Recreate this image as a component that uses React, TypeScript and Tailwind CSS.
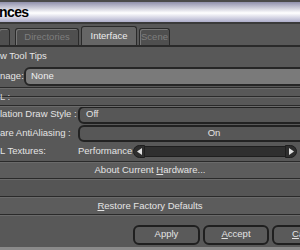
import React from 'react'

const font = { fontFamily: '"Liberation Sans", Arial, sans-serif' }

function Line() {
  return <div className="h-[2px] shrink-0 border-t border-[#2a2a2a] border-b border-b-[#6a6a6a]" />
}

function Tab({ label, active, w }: { label: string; active?: boolean; w: string }) {
  return (
    <div
      className={`${w} flex items-center justify-center rounded-t-[3px] border border-b-0 ${
        active
          ? 'h-[19px] bg-[#666666] border-[#2a2a2a] text-[#ececec]'
          : 'h-[17px] bg-[#4f4f4f] border-[#2a2a2a] text-[#7e7e7e] shadow-[inset_1px_1px_0_#777]'
      }`}
    >
      {label}
    </div>
  )
}

export default function App() {
  return (
    <div className="w-[300px] h-[250px] overflow-hidden bg-[#585858] text-[9.5px] text-[#e4e4e4] flex flex-col" style={font}>
      {/* title bar */}
      <div className="h-[24px] shrink-0 border-t-2 border-[#4a4a4a] border-b-2 border-b-[#3a3a3a] bg-[linear-gradient(to_bottom,#9090ac,#ffffff_55%,#aeaecb)] flex items-center">
        <span className="text-[14px] font-bold text-black tracking-[-0.6px] ml-[-1px]">nces</span>
      </div>

      {/* tabs */}
      <div className="h-[23px] shrink-0 flex items-end gap-[2px] border-b-2 border-[#2a2a2a] ml-[-2px]">
        <Tab label="" w="w-[12px]" />
        <div className="w-[1px]" />
        <Tab label="Directories" w="w-[64px]" />
        <Tab label="Interface" active w="w-[56px]" />
        <Tab label="Scene" w="w-[31px]" />
      </div>

      {/* show tool tips */}
      <div className="h-[19px] shrink-0 flex items-center">w Tool Tips</div>

      {/* image */}
      <div className="h-[20px] shrink-0 flex items-center">
        <span className="w-[24px]">nage:</span>
        <div className="flex-1 h-[19px] mr-[-10px] rounded-l-[6px] border-2 border-[#262626] bg-[#7a7a7a] flex items-center pl-[5px] text-[#eeeeee]">
          None
        </div>
      </div>

      {/* GL group */}
      <div className="h-[19px] shrink-0 relative pt-[1px]">
        <Line />
        <div className="absolute left-0 top-[4px] text-[#d8d8d8]">L :</div>
        <div className="mt-[7px]"><Line /></div>
        <div className="mt-[7px]"><Line /></div>
      </div>

      {/* draw style */}
      <div className="h-[19px] shrink-0 flex items-center">
        <span className="w-[78px]">lation Draw Style :</span>
        <div className="flex-1 h-[18px] mr-[-10px] rounded-l-[6px] border-2 border-[#222222] bg-[#575757] flex items-center pl-[6px]">
          Off
        </div>
      </div>

      {/* antialiasing */}
      <div className="h-[18px] shrink-0 flex items-center">
        <span className="w-[78px]">are AntiAliasing :</span>
        <div className="flex-1 h-[17px] mr-[-50px] rounded-l-[6px] border-2 border-[#222222] bg-[#575757] flex items-center justify-center">
          On
        </div>
      </div>

      {/* textures */}
      <div className="h-[17px] shrink-0 flex items-center pt-[1px]">
        <span className="w-[78px]">L Textures:</span>
        <span className="w-[55px]">Performance</span>
        <div className="w-[12px] h-[13px] rounded-l-full border border-[#1e1e1e] bg-[#2e2e2e] flex items-center justify-center">
          <svg width="5" height="7" viewBox="0 0 5 7"><path d="M5 0 L0 3.5 L5 7 Z" fill="#e0e0e0" /></svg>
        </div>
        <div className="w-[140px] h-[11px] bg-[#2f2f2f] border-y border-[#1e1e1e]" />
        <div className="w-[12px] h-[13px] rounded-r-full border border-[#1e1e1e] bg-[#2e2e2e] flex items-center justify-center">
          <svg width="5" height="7" viewBox="0 0 5 7"><path d="M0 0 L5 3.5 L0 7 Z" fill="#e0e0e0" /></svg>
        </div>
      </div>

      <div className="mt-[2px]"><Line /></div>
      {/* about */}
      <div className="h-[15px] shrink-0 flex items-center justify-center bg-[#5c5c5c]">
        <span>
          About Current <span className="underline">H</span>ardware...
        </span>
      </div>
      <Line />
      <div className="h-[16px] shrink-0 bg-[#555555]" />
      <Line />
      {/* restore */}
      <div className="h-[16px] shrink-0 flex items-center justify-center bg-[#5c5c5c]">
        <span>
          <span className="underline">R</span>estore Factory Defaults
        </span>
      </div>
      <Line />

      {/* buttons */}
      <div className="flex-1 flex items-center gap-[3px] pt-[6px] pl-[133px]">
        <div className="w-[67px] shrink-0 h-[20px] rounded-[6px] border-2 border-[#1f1f1f] bg-[#5a5a5a] flex items-center justify-center">
          Apply
        </div>
        <div className="w-[66px] shrink-0 h-[20px] rounded-[6px] border-2 border-[#1f1f1f] bg-[#5a5a5a] flex items-center justify-center">
          <span><span className="underline">A</span>ccept</span>
        </div>
        <div className="w-[66px] shrink-0 h-[20px] rounded-[6px] border-2 border-[#1f1f1f] bg-[#5a5a5a] flex items-center pl-[18px]">
          <span><span className="underline">C</span>ancel</span>
        </div>
      </div>
      <div className="h-[3px] shrink-0 bg-[#8a8a8a]" />
    </div>
  )
}
